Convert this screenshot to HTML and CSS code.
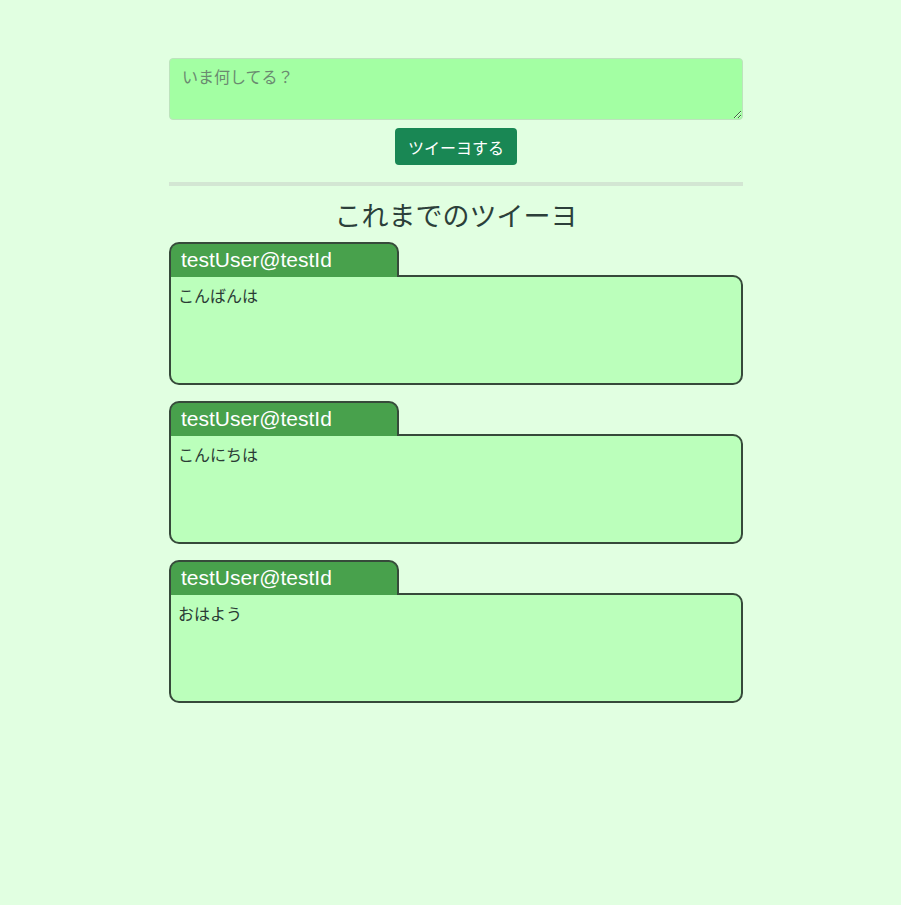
FILE: index.html
```html
<!DOCTYPE html>
<html lang="ja">
<head>
<meta charset="utf-8">
<title>ツイーヨ</title>
<link rel="stylesheet" href="styles.css">
</head>
<body>
<main class="main">
  <form class="post-form">
    <textarea class="post-input" placeholder="いま何してる？"></textarea>
    <div class="post-actions">
      <button type="button" class="post-button">ツイーヨする</button>
    </div>
  </form>
  <hr class="divider">
  <h2 class="timeline-title">これまでのツイーヨ</h2>
  <section class="timeline">
    <article class="tweet">
      <div class="tweet-tab">testUser@testId</div>
      <div class="tweet-body">こんばんは</div>
    </article>
    <article class="tweet">
      <div class="tweet-tab">testUser@testId</div>
      <div class="tweet-body">こんにちは</div>
    </article>
    <article class="tweet">
      <div class="tweet-tab">testUser@testId</div>
      <div class="tweet-body">おはよう</div>
    </article>
  </section>
</main>
</body>
</html>
```
FILE: styles.css
```css
* { box-sizing: border-box; }
html, body { margin: 0; padding: 0; }
body {
  background: #e1ffe1;
  font-family: "Liberation Sans", "Noto Sans CJK JP", sans-serif;
  color: #2a3b35;
  min-height: 905px;
}
.main {
  width: 574px;
  padding-top: 58px;
  margin-left: 169px;
}
.post-form { margin: 0; }
.post-input {
  display: block;
  width: 100%;
  height: 62px;
  background: #a3ffa3;
  border: 1px solid #bde3bd;
  border-radius: 4px;
  padding: 7px 12px;
  font-family: "Liberation Sans", "Noto Sans CJK JP", sans-serif;
  font-size: 16px;
  line-height: 24px;
  color: #2a3b35;
  resize: vertical;
}
.post-input::placeholder { color: #6a8a70; }
.post-actions {
  display: flex;
  justify-content: center;
  margin-top: 8px;
}
.post-button {
  width: 122px;
  height: 37px;
  background: #198754;
  border: none;
  border-radius: 4px;
  color: #fff;
  font-family: "Liberation Sans", "Noto Sans CJK JP", sans-serif;
  font-size: 16px;
  padding: 0;
}
.divider {
  border: none;
  height: 4px;
  background: #d3e6d3;
  margin: 17px 0 0 0;
}
.timeline-title {
  text-align: center;
  font-weight: 400;
  font-size: 27px;
  line-height: 34px;
  margin: 14px 0 0 0;
  color: #2c3f3a;
}
.timeline {
  margin-top: 8px;
  display: flex;
  flex-direction: column;
  gap: 16px;
}
.tweet { display: flex; flex-direction: column; align-items: flex-start; }
.tweet-tab {
  width: 230px;
  height: 35px;
  background: #48a14c;
  border: 2px solid #364a3a;
  border-bottom: none;
  border-radius: 10px 10px 0 0;
  color: #fff;
  font-size: 21px;
  line-height: 32px;
  padding-left: 10px;
  margin-bottom: -2px;
  position: relative;
}
.tweet-body {
  width: 574px;
  height: 110px;
  background: #bbffbb;
  border: 2px solid #364a3a;
  border-radius: 0 10px 10px 10px;
  padding: 9px 7px;
  font-size: 16px;
  line-height: 22px;
  color: #2a3b35;
}
```
